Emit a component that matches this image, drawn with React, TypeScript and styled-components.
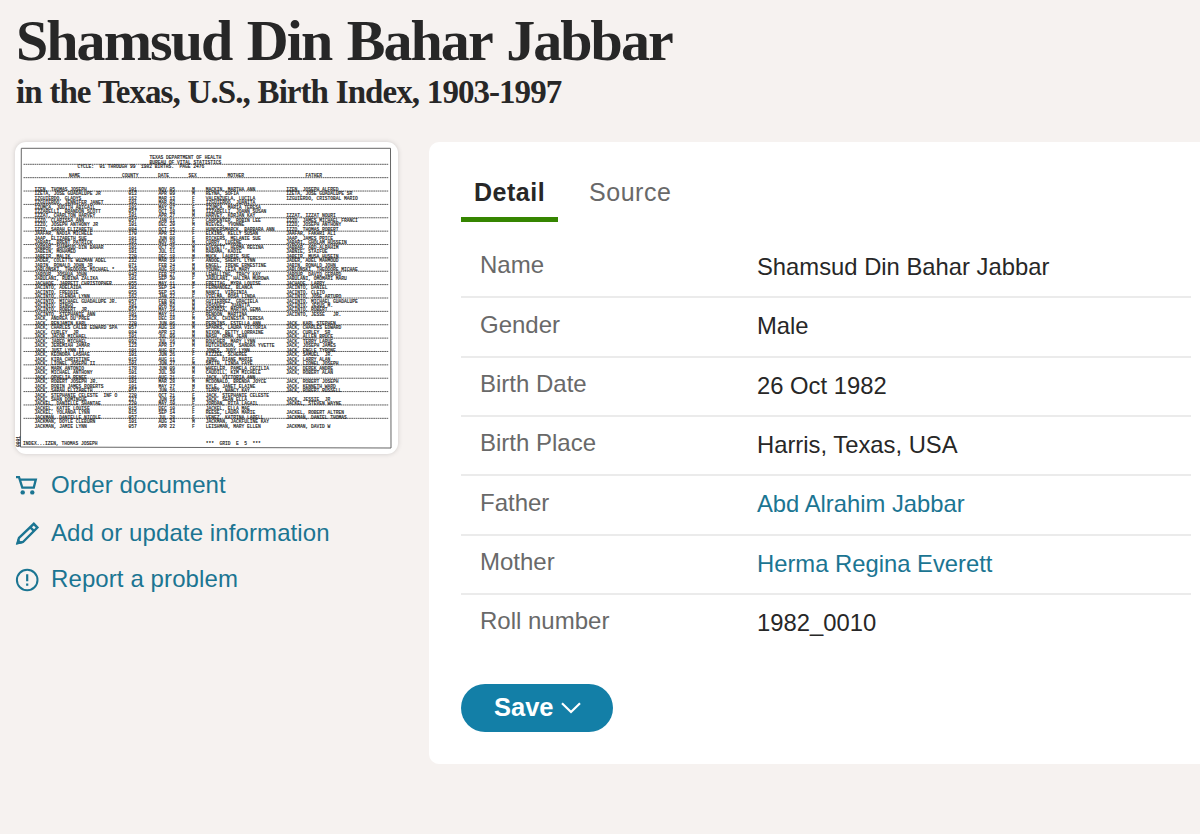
import React from 'react';
import styled, { createGlobalStyle } from 'styled-components';

const colors = {
  page: '#f6f2f0',
  card: '#ffffff',
  text: '#272727',
  muted: '#696969',
  link: '#1b7592',
  button: '#137fa7',
  green: '#358500',
  line: '#ebebeb',
};

const GlobalStyle = createGlobalStyle`
  * {
    box-sizing: border-box;
  }

  body {
    margin: 0;
    background: ${colors.page};
    color: ${colors.text};
    font-family: "Liberation Sans", Arial, sans-serif;
    overflow: hidden;
  }
`;

const Page = styled.div`
  height: 834px;
  padding: 9px 0 0 15px;
  overflow: hidden;
`;

const Header = styled.header`
  height: 133px;
  font-family: "Liberation Serif", "Times New Roman", serif;
  font-weight: 700;
  white-space: nowrap;
`;

const Title = styled.h1`
  margin: 0;
  padding-left: 1px;
  font-size: 58px;
  line-height: 64px;
  letter-spacing: -1.95px;
  word-spacing: 3px;
`;

const Subtitle = styled.h2`
  margin: 0;
  padding-left: 1px;
  font-size: 33px;
  line-height: 38px;
  letter-spacing: -0.95px;
  word-spacing: 0.5px;
`;

const Columns = styled.main`
  display: flex;
  align-items: flex-start;
`;

const Sidebar = styled.aside`
  width: 414px;
  flex-shrink: 0;
`;

const Thumbnail = styled.a`
  display: block;
  width: 383px;
  height: 312px;
  border-radius: 11px;
  background: ${colors.card};
  box-shadow: 0 0 5px rgba(0, 0, 0, 0.16);

  svg {
    display: block;
  }
`;

const LinkList = styled.nav`
  display: flex;
  flex-direction: column;
  padding-top: 7px;
`;

const ActionLink = styled.a<{ $height?: number }>`
  display: flex;
  align-items: center;
  gap: 11px;
  height: ${({ $height }) => $height ?? 48}px;
  color: ${colors.link};
  font-size: 24px;
  line-height: 28px;
  letter-spacing: 0.1px;

  svg {
    width: 25px;
    height: 26px;
    flex-shrink: 0;
  }
`;

const LinkText = styled.span`
  padding-bottom: 1px;
`;

const Card = styled.section`
  flex: 1;
  height: 622px;
  padding: 24px 9px 0 32px;
  border-radius: 10px 0 0 10px;
  background: ${colors.card};
`;

const Tabs = styled.div`
  display: flex;
  gap: 18px;
  height: 71px;
`;

const Tab = styled.button<{ $active?: boolean }>`
  height: 56px;
  padding: 2px 13px 0;
  border: 0;
  border-bottom: 5px solid ${({ $active }) => ($active ? colors.green : 'transparent')};
  background: none;
  color: ${({ $active }) => ($active ? colors.text : colors.muted)};
  font-family: inherit;
  font-size: 25px;
  font-weight: ${({ $active }) => ($active ? 700 : 400)};
  letter-spacing: 0.5px;
`;

const Facts = styled.dl`
  margin: 0;
`;

const Row = styled.div`
  display: grid;
  grid-template-columns: 277px 1fr;
  height: 59.33px;
  padding: 14px 0 0 19px;
  line-height: 28px;

  & + & {
    border-top: 2px solid ${colors.line};
    padding-top: 12.5px;
  }
`;

const Label = styled.dt`
  color: ${colors.muted};
  font-size: 24px;
`;

const Value = styled.dd`
  margin: 0;
  padding-top: 1.5px;
  font-size: 23.8px;

  a {
    color: ${colors.link};
  }
`;

const SaveButton = styled.button`
  display: flex;
  align-items: center;
  gap: 7px;
  width: 152px;
  height: 48px;
  margin-top: 32px;
  padding: 0 0 1px 33px;
  border: 0;
  border-radius: 24px;
  background: ${colors.button};
  color: #fff;
  font-family: inherit;
  font-size: 25.5px;
  font-weight: 700;
`;

type Entry = [name: string, county: string, date: string, sex: string, mother: string, father: string];

const entries: Entry[] = [
  ['IZEN, THOMAS JOSEPH', '101', 'NOV 05', 'M', 'MACKIN, MARTHA ANN', 'IZEN, JOSEPH ALFRED'],
  ['IZETA, JOSE GUADALUPE JR', '013', 'APR 09', 'M', 'REYNA, SOFIA', 'IZETA, JOSE GUADALUPE SR'],
  ['IZGUIERDO, GLADYS', '162', 'MAR 13', 'F', 'VALENZUELA, LUCILA', 'IZGUIERDO, CRISTOBAL MARIO'],
  ['IZGUIERDO, JENNIFER JANET', '101', 'MAR 03', 'F', 'IZGUIERDO, JUANITA', ''],
  ['IZUMCA, JUDITH ABIGAIL', '101', 'MAY 07', 'F', 'IZUMCA, MARIA TERESA', ''],
  ['IZZARELLI, BRANDON SCOTT', '057', 'OCT 18', 'M', 'IZZARELLI, JOANN SUSAN', ''],
  ['IZZAT, CHARLTON HARVEY', '101', 'APR 27', 'M', 'HARVEY, KORJAN KAY', 'IZZAT, IZZAT NOURI'],
  ['IZZO, CLARISSA ANN', '057', 'JAN 11', 'F', 'CARPENTER, ROBIN LEE', 'IZZO, JAMES MICHAEL FRANCI'],
  ['IZZO, JOSEPH ANTHONY JR', '101', 'DEC 20', 'M', 'NIEVES, YVONNE', 'IZZO, JOSEPH ANTHONY'],
  ['IZZO, SARAH ELIZABETH', '084', 'OCT 15', 'F', 'HUNDERSMARCK, BARBARA ANN', 'IZZO, THOMAS ROBERT'],
  ['JAAFAR, NADIA MICHELE', '170', 'APR 12', 'F', 'ELKINS, KELLY SUSAN', 'JAAFAR, FAKHRI ALI'],
  ['JAAP, ELIZABETH SUE', '101', 'JUN 08', 'F', 'RICKERS, MELANIE SUE', 'JAAP, JAMES PRICE'],
  ['JABARI, BRENT PATRICK', '101', 'NOV 10', 'M', 'CURRY, LUGENE', 'JABARI, GHOLAM HUSSEIN'],
  ['JABBAR, SHAMSUD-DIN BAHAR', '101', 'OCT 26', 'M', 'EVERETT, HERMA REGINA', 'JABBAR, ABD-ALRAHIM'],
  ['JABEIN, MOHAMED', '101', 'JUL 11', 'M', 'RABAMA, KADIE', 'JABNIE, STAIFUE'],
  ['JABEIR, MALIK', '220', 'DEC 18', 'M', 'MUCK, LAURIE SUE', 'JABEIR, MUSA HUSEIN'],
  ['JADER, COLETTE WUZMAN ADEL', '232', 'MAR 19', 'F', 'ANDOE, SHERYL LYNN', 'JADER, ADEL MAHMOUD'],
  ['JABIN, RONALD JOHN JR.', '071', 'FEB 24', 'M', 'ENGEL, IRENE ERNESTINE', 'JABIN, RONALD JOHN'],
  ['JABLONSKI, THEODORE MICHAEL *', '220', 'AUG 18', 'M', 'YOUNG, LEIA MARY', 'JABLONSKI, THEODORE MICHAE'],
  ['JABOUR, JOSHUA JOHN', '043', 'FEB 27', 'M', 'LEWALLING, TRACY KAY', 'JABOUR, DAVID GERARD'],
  ['JABULANI, RUBINA ZALIKA', '101', 'SEP 30', 'F', 'JABULANI, HALIMA MUROWA', 'JABULANI, OMOMARI MARU'],
  ['JACHADE, JARRETT CHRISTOPHER', '055', 'MAY 11', 'M', 'FREITAG, MYRA LOUISE', 'JACHADE, LARRY'],
  ['JACINTO, ADELAIDA', '101', 'SEP 14', 'F', 'FERNANDEZ, BLANCA', 'JACINTO, DANIEL'],
  ['JACINTO, FREDDIE', '055', 'SEP 15', 'M', 'NANCI, VIRGINIA', 'JACINTO, CLETO'],
  ['JACINTO, GLENDA LYNN', '162', 'JAN 22', 'F', 'VIELMA, ROSA LINDA', 'JACINTO, JOSE ARTURO'],
  ['JACINTO, MICHAEL GUADALUPE JR.', '057', 'FEB 03', 'M', 'GUTIERREZ, GRACIELA', 'JACINTO, MICHAEL GUADALUPE'],
  ['JACINTO, RINGO', '101', 'APR 03', 'M', 'VASQUEZ, JUANITA', 'JACINTO, JESUS M.'],
  ['JACINTO, ROBERT  JR.', '057', 'MAY 19', 'M', 'ESPARZA, MARTHA GEMA', 'JACINTO, ROBERT'],
  ['JACINTO, STEPHANIE ANN', '101', 'MAY 11', 'F', 'RENDON, MARTINA', 'JACINTO, JESSE   JR.'],
  ["JACK, ANDREA DU'PREE", '123', 'DEC 18', 'M', 'JACK, CHINESTA TERESA', ''],
  ['JACK, BENJAMIN KARL', '220', 'JUN 06', 'M', 'PERKINS, ESTELLA ANN', 'JACK, KARL STEPHEN'],
  ['JACK, CHARLES CALEB EDWARD SPA', '057', 'AUG 18', 'M', 'SPARKS, LAURA VICTORIA', 'JACK, CHARLES EDWARD'],
  ['JACK, CURLEY  JR', '084', 'APR 13', 'M', 'NIXON, BETTY LORRAINE', 'JACK, CURLEY  SR'],
  ['JACK, JACOB MICHAEL', '101', 'JUL 09', 'M', 'NASH, ORMA JEAN', 'JACK, ALLEN BRUCE'],
  ['JACK, JARED MICHAEL', '092', 'JUL 16', 'M', 'BOUCHER, MARY LYNN', 'JACK, TERRY LARUE'],
  ['JACK, JEREMIAH JAMAR', '123', 'APR 17', 'M', 'HUTCHINSON, SANDRA YVETTE', 'JACK, JOSEPH JAMES'],
  ['JACK, JUST LYNN II', '101', 'AUG 07', 'F', 'JONES, JUDY LYNN', 'JACK, ENGLE TYRONE'],
  ['JACK, KEONDRA LASHAE', '101', 'JUN 26', 'F', 'KIZZEE, SCHEREE', 'JACK, SAMUEL  JR.'],
  ['JACK, KIRA CHRISTINE', '015', 'AUG 11', 'F', 'JUNG, DIANE MARIE', 'JACK, LARRY ALAN'],
  ['JACK, LIONEL JOSEPH II', '101', 'JUN 27', 'M', 'SMITH, LINDA FAYE', 'JACK, LIONEL JOSEPH'],
  ['JACK, MARK ANTONIO', '178', 'JUN 09', 'M', 'WHEELER, PAMELA CECILIA', 'JACK, DEREK ANDRE'],
  ['JACK, MICHAEL ANTHONY', '101', 'JUL 30', 'M', 'CAUDILL, KIM MICHELE', 'JACK, ROBERT ALAN'],
  ['JACK, OPHELIA RENEE', '101', 'AUG 21', 'F', 'JACK, VICTORIA ANN', ''],
  ['JACK, ROBERT JOSEPH JR.', '101', 'MAR 28', 'M', 'MCDONALD, BRENDA JOYCE', 'JACK, ROBERT JOSEPH'],
  ['JACK, ROBIN JAMES ROBERTS', '101', 'MAY 27', 'M', 'KYLE, JANET ELAINE', 'JACK, KENNETH WARD'],
  ['JACK, SARAH ELIZABETH', '057', 'JUN 16', 'F', 'TERRY, NANCY KAY', 'JACK, ROBERT RUSSELL'],
  ['JACK, STEPHANIE CELESTE  INF O', '220', 'OCT 21', 'F', 'JACK, STEPHANIE CELESTE', ''],
  ['JACK, SHAN DOMINGUE', '227', 'JUN 19', 'M', 'JACK, SEAN ELLA', 'JACK, JESSIE  JR'],
  ['JACKEL, DANIELLE SHANTAE', '220', 'MAY 10', 'F', 'JORDAN, RITA LAGAIL', 'JACKEL, STEVEN WAYNE'],
  ['JACKEL, KATIE LOUISE', '015', 'DEC 10', 'F', 'JACKEL, ELLA MAE', ''],
  ['JACKEL, YOLANDA LYNN', '015', 'SEP 14', 'F', 'REESE, LAURA MARIE', 'JACKEL, ROBERT ALTREN'],
  ['JACKMAN, DANIELLE NICOLE', '057', 'JUL 28', 'F', 'VENEZ, KATRINA LABELL', 'JACKMAN, DANIEL THOMAS'],
  ['JACKMAN, DOYLE CLEBURN', '101', 'AUG 24', 'M', 'JACKMAN, JACKFULINE KAY', ''],
  ['JACKMAN, JAMIE LYNN', '057', 'APR 22', 'F', 'LEISHMAN, MARY ELLEN', 'JACKMAN, DAVID W'],
];

const facts = [
  { label: 'Name', value: 'Shamsud Din Bahar Jabbar' },
  { label: 'Gender', value: 'Male' },
  { label: 'Birth Date', value: '26 Oct 1982' },
  { label: 'Birth Place', value: 'Harris, Texas, USA' },
  { label: 'Father', value: 'Abd Alrahim Jabbar', link: true },
  { label: 'Mother', value: 'Herma Regina Everett', link: true },
  { label: 'Roll number', value: '1982_0010' },
];

const ScanText = styled.g`
  font-family: "Liberation Mono", "Courier New", monospace;
  font-size: 4.6px;
  fill: #161616;
  stroke: #161616;
  stroke-width: 0.14px;

  text {
    white-space: pre;
  }
`;

// Scanned index page: ruled printer paper with one line per birth
function IndexScan() {
  return (
    <svg width="383" height="312" viewBox="0 0 383 312" role="img" aria-label="Birth index page">
      <path d="M6.3 6.3 H375.5 L376 306 L5.5 305 Z" fill="none" stroke="#666" strokeWidth="1" />
      {Array.from({ length: 20 }, (_, i) => (
        <path
          key={i}
          d={`M8.5 ${22.3 + i * 13.37} H373.5`}
          stroke="#333"
          strokeWidth="0.8"
          strokeDasharray="1.7 0.5"
        />
      ))}
      <ScanText>
        <text x="134.5" y="17.2">TEXAS DEPARTMENT OF HEALTH</text>
        <text x="134.5" y="21.8">BUREAU OF VITAL STATISTICS</text>
        <text x="62.5" y="26.2">CYCLE:  01 THROUGH 99  1982 BIRTHS.  PAGE 2476</text>
        <text x="54" y="35.2">NAME</text>
        <text x="107" y="35.2">COUNTY</text>
        <text x="143" y="35.2">DATE</text>
        <text x="173.5" y="35.2">SEX</text>
        <text x="212.5" y="35.2">MOTHER</text>
        <text x="290.5" y="35.2">FATHER</text>
        {entries.map(([name, county, date, sex, mother, father], i) => {
          const y = 48.6 + i * 4.477;
          return (
            <React.Fragment key={name}>
              <text x="19.5" y={y}>{name}</text>
              <text x="113.5" y={y}>{county}</text>
              <text x="143.5" y={y}>{date}</text>
              <text x="177" y={y}>{sex}</text>
              <text x="190.7" y={y}>{mother}</text>
              <text x="271.2" y={y}>{father}</text>
            </React.Fragment>
          );
        })}
        <text x="8" y="302.8">INDEX...IZEN, THOMAS JOSEPH</text>
        <text x="190.7" y="303.2">***  GRID  E  5  ***</text>
        <text x="0" y="0" transform="translate(5 305) rotate(-90)">0001</text>
      </ScanText>
    </svg>
  );
}

function CartIcon() {
  return (
    <svg viewBox="0 0 25 26" fill="none" stroke="currentColor" strokeWidth="2.3">
      <path d="M1 5.2H4L7.3 15.6H18.8L20.8 7.6H4.8" />
      <circle cx="7.7" cy="20.4" r="2.2" fill="currentColor" stroke="none" />
      <circle cx="17.3" cy="20.4" r="2.2" fill="currentColor" stroke="none" />
    </svg>
  );
}

function PencilIcon() {
  return (
    <svg viewBox="0 0 25 26" fill="none" stroke="currentColor" strokeWidth="2.4">
      <path d="M2.5 23.2L4 17.8L18.8 3.8L22.4 7.6L8 22Z" />
      <path d="M14.8 6.8L19.2 11.2" />
      <path d="M1.2 24.6L2.8 18.8L7.6 23.2Z" fill="currentColor" stroke="none" />
    </svg>
  );
}

function AlertIcon() {
  return (
    <svg viewBox="0 0 25 26" fill="none" stroke="currentColor" strokeWidth="2">
      <circle cx="12.2" cy="13" r="10.3" />
      <path d="M12.2 7.3V14.3M12.2 16.6V18.8" strokeWidth="2.2" />
    </svg>
  );
}

export default function App() {
  return (
    <>
      <GlobalStyle />
      <Page>
        <Header>
          <Title>Shamsud Din Bahar Jabbar</Title>
          <Subtitle>in the Texas, U.S., Birth Index, 1903-1997</Subtitle>
        </Header>

        <Columns>
          <Sidebar>
            <Thumbnail>
              <IndexScan />
            </Thumbnail>
            <LinkList>
              <ActionLink>
                <CartIcon />
                <LinkText>Order document</LinkText>
              </ActionLink>
              <ActionLink>
                <PencilIcon />
                <LinkText>Add or update information</LinkText>
              </ActionLink>
              <ActionLink $height={45}>
                <AlertIcon />
                <LinkText>Report a problem</LinkText>
              </ActionLink>
            </LinkList>
          </Sidebar>

          <Card>
            <Tabs>
              <Tab $active>Detail</Tab>
              <Tab>Source</Tab>
            </Tabs>
            <Facts>
              {facts.map(({ label, value, link }) => (
                <Row key={label}>
                  <Label>{label}</Label>
                  <Value>{link ? <a>{value}</a> : value}</Value>
                </Row>
              ))}
            </Facts>
            <SaveButton>
              Save
              <svg width="20" height="12" viewBox="0 0 20 12" fill="none" stroke="currentColor" strokeWidth="2.2">
                <path d="M1 1.2L10 10L19 1.2" />
              </svg>
            </SaveButton>
          </Card>
        </Columns>
      </Page>
    </>
  );
}
